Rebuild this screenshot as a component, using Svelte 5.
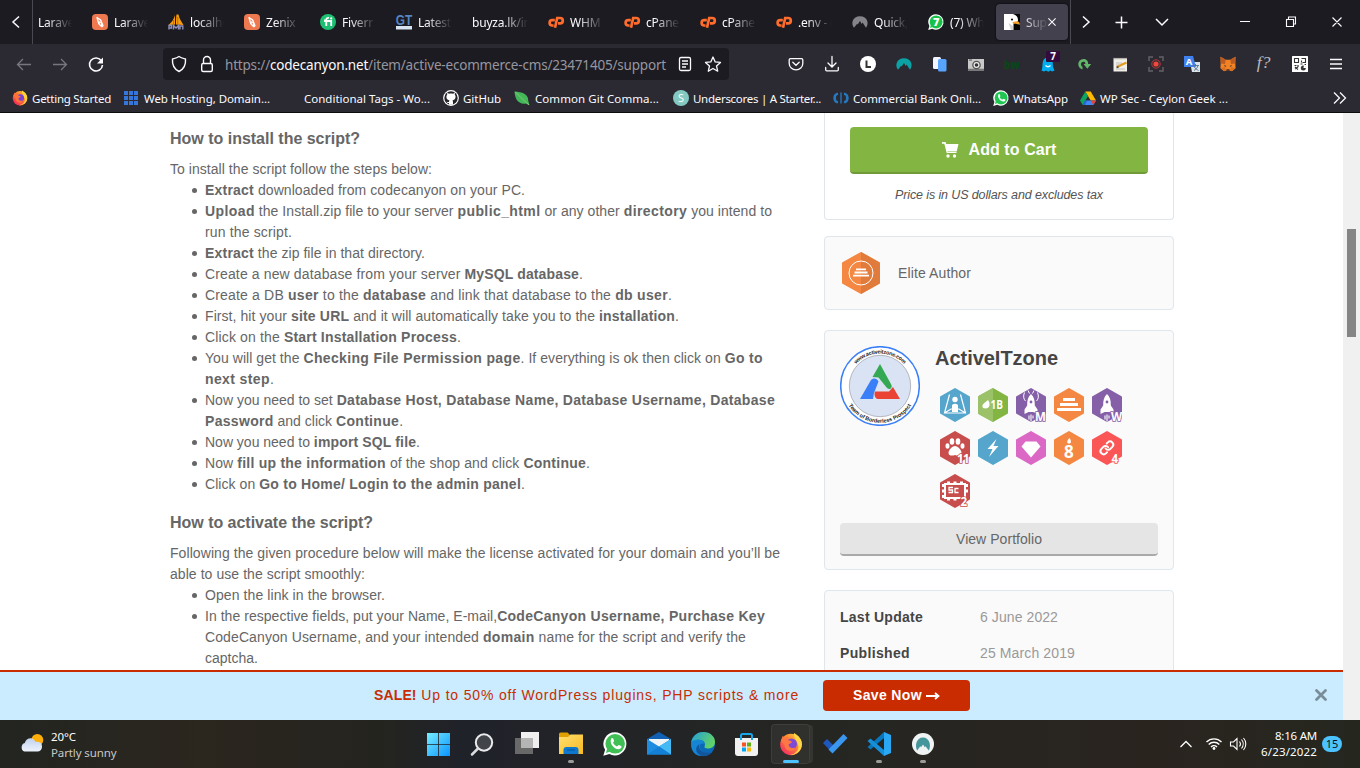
<script>
  // Spreads the letters of a line so that it takes the given width;
  // bold runs get a little more (or less) room than the regular ones.
  function fit(node, options) {
    const [width, extra = 0.15] = Array.isArray(options) ? options : [options];
    if (!width) return;
    const natural = node.getBoundingClientRect().width;
    const count = node.textContent.length;
    const bolds = [...node.querySelectorAll('b')];
    const boldCount = bolds.reduce((sum, b) => sum + b.textContent.length, 0);
    const spacing = (width - natural - extra * boldCount) / count;
    node.style.letterSpacing = `${spacing}px`;
    for (const b of bolds) b.style.letterSpacing = `${spacing + extra}px`;
  }

  const hex = (fill) => `<path d="M15 1 29 9V25L15 33 1 25V9Z" fill="${fill}" stroke="${fill}" stroke-width="2" stroke-linejoin="round"/>`;
  const num = (t, fill, x = 18, y = 32) => `<text x="${x}" y="${y}" font-family="Open Sans, sans-serif" font-weight="700" font-size="11.500" fill="#fff" stroke="${fill}" stroke-width="1.600" paint-order="stroke" letter-spacing="-.5">${t}</text>`;
  const rocket = '<path d="M15 6c3 3 4 6.500 3.800 11.500l2.700 4v4.500l-4-2h-5l-4 2v-4.500l2.700-4C11 12.500 12 9 15 6Z" fill="#fff"/><circle cx="15" cy="14" r="1.400" fill="#8560a8"/><path d="M13 27.500v4M15 26.500v7M17 27.500v3" stroke="#fff" stroke-width="1.100"/>';
  const cp = '<path d="M6.800 6.100H4.300a2.700 2.700 0 0 0 0 5.400h1.300M7 13.800 9.200 4h2.900a2.600 2.600 0 0 1 0 5.400H10" fill="none" stroke="#ff6c2c" stroke-width="2.700"/>';
  const bubble = (fill) => `<path d="M8 .2a7.700 7.700 0 1 1-3.700 14.500L.2 15.900l1.200-4A7.700 7.700 0 0 1 8 .2Z" fill="#fff"/><circle cx="8.100" cy="7.900" r="6.500" fill="${fill}"/><path d="m2 14 .8-3 2 2z" fill="${fill}"/>`;
  const phone = '<path d="M5.600 4.300c.5-.5 1-.3 1.200.2l.6 1.400c.1.500-.6.900-.7 1.300.6 1.200 1.500 1.900 2.600 2.400.5-.1.900-1 1.300-.9l1.500.7c.5.300.2 1.100-.2 1.500-2.800 2.300-8.500-2.900-6.300-6.600Z" fill="#fff"/>';
  const fox = '<circle cx="8" cy="8.300" r="7.200" fill="url(#ff)"/><path d="M10 .6c3 1.500 5.800 4.800 5.200 8.500-.8 4.400-4.700 6.500-8 6.200 4.300-.8 6.300-3.600 5.600-6.700C12.200 6 9.500 4 10 .6Z" fill="#ffd43a"/><circle cx="8.300" cy="8" r="3.700" fill="#7542d4"/><path d="M1.300 5.800 2.500 2.500l1.400 2L5.800 3l.5 2.500c1 .1 2 .5 2.400 1.300L6.400 8.300c0 2 2 3 4.400 2C9.600 14 4 13.200 3.600 8.700Z" fill="#ff7039"/>';
  const nord = (fill) => `<path d="M2 13.800C-1.400 9.500.5 2.200 8 2.200s9.400 7.300 6 11.600l-3.400-5.200-.9 1.500L8 7 5.700 10.600 5.100 9.700Z" fill="${fill}"/>`;

  const art = {
    laravel: '<rect width="16" height="16" rx="4" fill="#ee7950"/><path d="m5 3.500 3.700 2.500L11 11.800 9.800 12.700 6.800 9.800Z" fill="none" stroke="#fff" stroke-width="1.300" stroke-linejoin="round"/><path d="M8.700 6 7 9l2.300-.5.300 3.500" fill="none" stroke="#fff" stroke-width="1"/>',
    pma: '<path d="M7 1C6 5 4 8 .5 11L7 10.500ZM8.500.5C8 4 8 7 8 10.500l7.500.5C13.500 8 11 4 10.500.5Z" fill="#f89c0e"/><path d="M9.700 3v7M5.500 6v4.500" stroke="#9a5a12" stroke-width=".7"/><path d="M1 15.500v-4h2.500v2.500H1m4.500 1.500v-4L8 14l2.500-2.500v4m1.500 0v-3.500h2.800v3.500" stroke="#8f8fb8" stroke-width="1.400" fill="none"/>',
    fiverr: '<circle cx="8" cy="8" r="8" fill="#1dbf73"/><path d="M4 6.500h2.300V5.700C6.300 4.200 7.200 3.700 9 3.900M6.300 6v6M4 7h7.200v5" fill="none" stroke="#fff" stroke-width="1.800"/><circle cx="11.200" cy="4.400" r="1.100" fill="#fff"/>',
    gt: '<rect y="12" width="16" height="3.500" fill="#d7e4f2"/><text x="-.3" y="10.800" font-family="Liberation Sans" font-weight="700" font-size="14" textLength="16.500" lengthAdjust="spacingAndGlyphs" fill="#5486c0">GT</text>',
    cp,
    nordGrey: nord('#85848b'),
    nordTeal: nord('#0aa2a4'),
    wa7: bubble('#16c14a') + '<text x="5" y="12" font-family="Open Sans" font-weight="800" font-size="11" fill="#fff">7</text>',
    wa: bubble('#1fc752') + phone,
    bird: '<rect width="16" height="16" fill="#050505"/><path d="M0 0h9c4 1 5.500 4 4.800 7.500L9.500 9.500 9.500 16H0Z" fill="#fff"/><path d="m8.500 8 4.500-.7c2 .3 3 1.500 2.800 3.500-2-.8-4-1-6.800-1Z" fill="#f4a024"/><circle cx="8" cy="5.500" r="1.100" fill="#111"/><path d="m4.500 9 4.500 3v4H7Z" fill="#d2d2d2"/>',
    firefox: fox,
    grid: '<path d="M0 0h4v4H0zm5 0h4v4H5zm5 0h4v4h-4zM0 5h4v4H0zm5 0h4v4H5zm5 0h4v4h-4zM0 10h4v4H0zm5 0h4v4H5zm5 0h4v4h-4z" fill="#3576da" transform="translate(1 1)"/>',
    github: '<circle cx="8" cy="8" r="7.900" fill="#fff"/><circle cx="8" cy="8" r="6.700" fill="#25242b"/><path d="M4.300 4.500 4 2.800l2 .9c1.300-.3 2.700-.3 4 0l2-.9-.3 1.700c1.700 2.200.9 5.500-2.200 5.900.7.800.5 2.500.5 4.300H6v-1.800c-1.500.3-2-.5-2.600-1.500 1 .2 1.700 1 2.600.6 0-.6.100-1.200.5-1.600-3.100-.4-3.900-3.700-2.200-5.900Z" fill="#fff"/>',
    leaf: '<path d="M.5 1.500C8 2 14.500 4 14.200 10.500l1.300 4.800-3.500-1.800C5 14.700 1 10 .5 1.500Z" fill="#44b75b"/><path d="M1 2c5 4 7 7 14 13" stroke="#8fd06c" fill="none" stroke-width=".8"/>',
    under: '<circle cx="8" cy="8" r="8" fill="#83c9c2"/><text x="4.900" y="12" font-family="Open Sans" font-size="11" fill="#fff">S</text>',
    bank: '<path d="M5 2.700C2 2.700.3 5 .3 8S2 13.300 5 13.300V11C3.500 11 3 9.800 3 8s.5-3 2-3Zm6 0c3 0 4.700 2.300 4.700 5.300S14 13.300 11 13.300V11c1.500 0 2-1.200 2-3s-.5-3-2-3ZM7.300 2.500h1.400v11H7.300z" fill="#2478bd"/>',
    drive: '<path d="M5.300 1.500h5.400l5.300 9h-5.300Z" fill="#ffba00"/><path d="M5.300 1.500 8 6.100 2.700 15 0 10.500Z" fill="#0fa35f"/><path d="M5.300 10.500H16L13.300 15H2.700Z" fill="#4285f4"/><path d="m10.700 10.500H16L13.300 15Z" fill="#ea4335"/><path d="M2.700 15 5.300 10.500h2L5 15Z" fill="#2367d5"/>',
    pocket: '<path d="M2.500 2.700h11a1.300 1.300 0 0 1 1.300 1.300v3.500a6.800 6.300 0 0 1-13.600 0V4a1.300 1.300 0 0 1 1.300-1.300ZM4.800 6.300 8 9.300l3.200-3" fill="none" stroke="#fbfbfe" stroke-width="1.300" stroke-linecap="round"/>',
    download: '<path d="M8 .5v10M4 7l4 4 4-4M1.700 11.500v2.300q0 1 1 1h10.600q1 0 1-1v-2.300" fill="none" stroke="#fbfbfe" stroke-width="1.300" stroke-linecap="round"/>',
    ell: '<circle cx="8" cy="8" r="8" fill="#fff"/><path d="M6.500 4.500v6.600H11" stroke="#333" stroke-width="2" fill="none"/>',
    blue: '<rect x="1" y="1" width="8" height="12" rx="1.500" fill="#f2f5ff"/><rect x="6" y="3" width="8.500" height="12.500" rx="1.500" fill="#58a5ff"/>',
    camera: '<rect y="3" width="16" height="11.500" fill="#c9c9c9"/><path d="M1 4h3M0 13.500h16" stroke="#777" stroke-width="1.500"/><circle cx="8.500" cy="9" r="4.300" fill="#555"/><circle cx="8.500" cy="9" r="3" fill="#eee"/><circle cx="8.500" cy="9" r="1.800" fill="#333"/>',
    bw: '<text x="0" y="13" font-family="Open Sans" font-weight="800" font-size="12" textLength="16" lengthAdjust="spacingAndGlyphs" fill="#0c4518">bw</text>',
    ghost: '<path d="M1.500 14.500C3 11 2 8 3.200 4.500 5 .5 11 .5 12.500 4.500L13 11l1.500 3.500-2.500 1-1.500-1-2.200 1.200-2.300-1.200-2 1Z" fill="#00aef0"/><path d="M5.500 9.500q2.500 2.500 5 0" fill="none" stroke="#fff" stroke-width="1.300"/>',
    gee: '<path d="M6.500 13.500C.5 12 1 3 7.500 3c3.500 0 4.700 2.300 4.700 5.300H9.500c-.1-2-1-2.500-2-2.500-3 0-3.100 3.800-1 5ZM7.500 8h7.700l-3.900 4.700Z" fill="#62b668"/>',
    note: '<rect x="1.500" y="2" width="13.500" height="13.500" fill="#f1efe7"/><path d="M1.500 2.500H15" stroke="#77756f" stroke-width="1.500" stroke-dasharray="1 1"/><path d="M4 7h6M4 9h4M4 13h9" stroke="#bbb"/><path d="m5 11 9.500-4.500" stroke="#e39a20" stroke-width="2"/><path d="m4.500 11.500 2-.8" stroke="#444" stroke-width="1.500"/>',
    rec: '<path d="M1 5V1h4m6 0h4v4m0 6v4h-4m-6 0H1v-4" fill="none" stroke="#656268" stroke-width="1.400"/><circle cx="8" cy="8" r="4.200" fill="none" stroke="#b83a36"/><circle cx="8" cy="8" r="2.600" fill="#f2463f"/>',
    translate: '<path d="M6 6h10v10H8Z" fill="#dce3e8"/><path d="M0 0h9l3 11H0Z" fill="#3f81ef"/><text x="1.700" y="8.800" font-family="Open Sans" font-weight="700" font-size="9.500" fill="#fff">A</text><path d="M8.500 9.500H15M11.500 8v1.500M14 9.500c-.5 2.500-2.500 4-4 5m0-4c1 2 3 3 4.500 4" stroke="#54799a" fill="none"/>',
    mask: '<path d="m.5.800 5.200 3h4.600l5.200-3-.2 7 .3 4.400-3.600 3-2.500-.7h-3l-2.500.7-3.600-3 .3-4.400Z" fill="#f28325"/><path d="m.5.800 5.200 3L5 8 .8 7.500Zm15 0-5.200 3L11 8l4.200-.5Z" fill="#bb5b22"/><path d="m4 9 2.500 1-1.500.8Zm8 0-2.500 1 1.500.8Z" fill="#33313a"/><path d="M6.500 13.200h3v1.600h-3z" fill="#4a3330"/><path d="m1 12 4-1 1 4-2 0zm14 0-4-1-1 4h2z" fill="#d9701f"/>',
    func: '<text x=".8" y="12" font-family="Liberation Serif" font-style="italic" font-size="17.500" fill="#b9b8bd">f?</text>',
    qr: '<rect width="16" height="16" rx=".5" fill="#fff"/><path d="M2.500 2.500h4v4h-4zM9.500 2.500h4v4h-3M9.500 4.500v2" fill="none" stroke="#333" stroke-width="1.100"/><path d="M2.500 9.500h2M6 9v2M3 13l3-2M3 11l3 2.500M8.500 8h2M12.500 8.500h1.500" fill="none" stroke="#333" stroke-width="1.200"/><circle cx="11.300" cy="12" r="2.500" fill="#333"/><path d="m11.500 12 .5-3.500 3 3.500Z" fill="#fff"/>',
    menu: '<path d="M2 3.500h12M2 8h12M2 12.500h12" stroke="#fbfbfe" stroke-width="1.300"/>',
    start: '<path d="M0 0h11.200v11.200H0zM12 0h11v11.200H12zM0 12h11.200v11H0zM12 12h11v11H12z" fill="url(#win)"/>',
    search: '<circle cx="13" cy="9.500" r="8.200" fill="#4a4d51" fill-opacity=".8" stroke="#e8eaec" stroke-width="2"/><path d="m7 15.500-6 6" stroke="#dadcde" stroke-width="2.500" stroke-linecap="round"/>',
    taskview: '<path d="M0 6h18v16H0z" fill="#696969"/><path d="M6 0h18v16H6z" fill="#efefef"/><path d="M6 6h12v10H6z" fill="#b5b5b5"/>',
    explorer: '<path d="M0 2q0-1.500 1.500-1.500h7L11 3v5H0Z" fill="#e0a100"/><path d="M0 5h9l2.500-2.500H24V22H0Z" fill="url(#fold)"/><path d="M4.500 22v-4q0-3 3-3h9q3 0 3 3v4Z" fill="#0d78ce"/><path d="M8 18h8" stroke="#075ba5" stroke-width="1.300"/>',
    waBig: '<g transform="scale(1.5)">' + bubble('#40bf55') + phone + '</g>',
    mail: '<path d="M0 7 12 0l12 7v7H0Z" fill="#1060b3"/><path d="M2 7h20v9H2Z" fill="#eef4f8"/><path d="M0 7v15.500h24V7L12 14.500Z" fill="#1e8de0"/><path d="M24 7v15.500L12 14.500Z" fill="#45b9f4"/><path d="m0 22.500 12-8 12 8Z" fill="#1380d5"/>',
    edge: '<circle cx="12" cy="12" r="12" fill="#0b68b7"/><path d="M.2 10C2 3 7 0 12 0c8 0 12 5 12 10 0 5-4 6.500-7.500 6.500-2 0-3.500-.7-3-2 1-2 .5-6.500-4.500-6.500C4 8 1 10 .2 10Z" fill="url(#edge)"/><path d="M.2 10C4 7 12 6 13.500 12c-5-2-6 3-3.500 6 2.500 3.500 8 3.500 11.500 1.500C14 27-1 26 .2 10Z" fill="#1686d4"/><path d="M8.500 12c-2 4 2 9 8 8.500 2 0 4-.5 5-1-4 6-12 6-15.500 1-2-4 0-7 2.500-8.500Z" fill="#12569e"/>',
    store: '<path d="M0 5h23v15q0 3-3 3H3q-3 0-3-3Z" fill="#f1f1f1"/><path d="M6 7V2.500Q6 1 7.500 1h8Q17 1 17 2.500V7" fill="none" stroke="#18a6e8" stroke-width="2"/><path d="M7 9.500h4v4H7z" fill="#f35325"/><path d="M12 9.500h4v4h-4z" fill="#61b010"/><path d="M7 14.500h4v4H7z" fill="#07a4ee"/><path d="M12 14.500h4v4h-4z" fill="#ffb908"/>',
    firefoxBig: '<g transform="scale(1.5)">' + fox + '</g>',
    todo: '<path d="m0 11 4-4 7.500 7.500-3 5.500Z" fill="#1e57bd"/><path d="M20.500 2 24.500 6 9.500 21.500 5.500 17.500Z" fill="#3a96ee"/>',
    vscode: '<path d="m17 0 7 3v18l-7 3Z" fill="#2ba8f4"/><path d="M17 0v6L3.500 17.500.5 15Z" fill="#0877bd"/><path d="M17 24v-6L3.500 6.500.5 9Z" fill="#168fd8"/>',
    nordBig: '<circle cx="11" cy="11" r="11" fill="#f0f3f3"/><path d="M5.200 17.500C2.600 13 4.200 4.500 11 4.500s8.400 8.500 5.800 13l-3.300-4.300-.7 1L11 11.500l-2 2.800-.7-1Z" fill="#44969a"/>'
  };

  const tabs = [
    { text: 'Laravel', first: true }, { icon: 'laravel', text: 'Laravel' }, { icon: 'pma', text: 'localhost' },
    { icon: 'laravel', text: 'Zenix -' }, { icon: 'fiverr', text: 'Fiverr /' }, { icon: 'gt', text: 'Latest v' },
    { text: 'buyza.lk/index' }, { icon: 'cp', text: 'WHM L' }, { icon: 'cp', text: 'cPanel' }, { icon: 'cp', text: 'cPanel' },
    { icon: 'cp', text: '.env - e' }, { icon: 'nordGrey', text: 'Quick, N' }, { icon: 'wa7', text: '(7) Wha' }
  ];
  const addons = ['pocket', 'download', 'ell', 'nordTeal', 'blue', 'camera', 'bw', 'ghost', 'gee', 'note', 'rec', 'translate', 'mask', 'func', 'qr', 'menu'];
  const bookmarks = [
    { icon: 'firefox', text: 'Getting Started', w: 79, box: 111 },
    { icon: 'grid', text: 'Web Hosting, Domain...', w: 126, box: 161, gap: 5 },
    { icon: '', text: 'Conditional Tags - Wo...', w: 126, box: 159 },
    { icon: 'github', text: 'GitHub', w: 38, box: 71 },
    { icon: 'leaf', text: 'Common Git Comma...', w: 124, box: 159, gap: 5 },
    { icon: 'under', text: 'Underscores | A Starter...', w: 128, box: 160 },
    { icon: 'bank', text: 'Commercial Bank Onli...', w: 128, box: 160 },
    { icon: 'wa', text: 'WhatsApp', w: 55, box: 87 },
    { icon: 'drive', text: 'WP Sec - Ceylon Geek ...', w: 128, box: 150 }
  ];
  const install = [
    [['<b>Extract</b> downloaded from codecanyon on your PC.', 320]],
    [['<b>Upload</b> the Install.zip file to your server <b>public_html</b> or any other <b>directory</b> you intend to', 567, 0.35], ['run the script.', 87]],
    [['<b>Extract</b> the zip file in that directory.', 220]],
    [['Create a new database from your server <b>MySQL database</b>.', 378, 0]],
    [['Create a DB <b>user</b> to the <b>database</b> and link that database to the <b>db user</b>.', 467]],
    [['First, hit your <b>site URL</b> and it will automatically take you to the <b>installation</b>.', 474, 0.1]],
    [['Click on the <b>Start Installation Process</b>.', 256, 0.05]],
    [['You will get the <b>Checking File Permission page</b>. If everything is ok then click on <b>Go to</b>', 558, 0.3], ['<b>next step</b>.', 69]],
    [['Now you need to set <b>Database Host, Database Name, Database Username, Database</b>', 570, 0.3], ['<b>Password</b> and click <b>Continue</b>.', 198, 0.3]],
    [['Now you need to <b>import SQL file</b>.', 215]],
    [['Now <b>fill up the information</b> of the shop and click <b>Continue</b>.', 385]],
    [['Click on <b>Go to Home/ Login to the admin panel</b>.', 320, 0.2]]
  ];
  const activate = [
    [['Open the link in the browser.', 180]],
    [['In the respective fields, put your Name, E-mail,<b>CodeCanyon Username, Purchase Key</b>', 560, 0.25], ['CodeCanyon Username, and your intended <b>domain</b> name for the script and verify the', 541, 0.2], ['captcha.', 53]]
  ];
  const badges = [
    hex('#55a5cc') + '<path d="m9.500 6.500-5 18.500h21l-5-18.500M4.500 25 11 21h8l6.500 4" fill="none" stroke="#fff" stroke-width="1.200"/><circle cx="15" cy="11.500" r="2.700" fill="#fff"/><path d="M12 24v-7q3-2.500 6 0v7Z" fill="#fff"/>',
    hex('#82b541') + '<path d="M15 0v34L1 26.500 0 25V9L1 7.500Z" fill="#9bc269"/><path d="M5 20c-2-4 2-5 5-8 3.500 5 1 10-5 8Z" fill="#fff"/><text x="12.500" y="21" font-family="Open Sans" font-size="11.500" font-weight="700" fill="#fff" textLength="12.500" lengthAdjust="spacingAndGlyphs">1B</text>',
    hex('#8560a8') + rocket + '<path d="M8.500 4.500C7 8 7.500 11 9.500 13M21.500 4.500C23 8 22.500 11 20.500 13M12 2.500l1.500 3M18 2.500l-1.500 3" stroke="#fff" fill="none"/>' + num('M', '#8560a8', 19, 33),
    hex('#f48843') + '<path d="M9 10h12v3H9zm-3 5h18v3H6zm-3 5h24v3H3z" fill="#fff"/>',
    hex('#8560a8') + rocket + num('W', '#8560a8', 19, 33),
    hex('#c84d4d') + '<g fill="#fff"><ellipse cx="7.500" cy="15" rx="2" ry="2.800"/><ellipse cx="12" cy="10.500" rx="2.300" ry="3.200"/><ellipse cx="18" cy="10.500" rx="2.300" ry="3.200"/><ellipse cx="22.500" cy="15" rx="2" ry="2.800"/><path d="M15 15c3 0 6.500 4 6.500 7s-4 3-6.500 2c-2.500 1-6.500 1-6.500-2s3.500-7 6.500-7Z"/></g>' + num('11', '#c84d4d', 17, 31.5),
    hex('#55a5cc') + '<path d="m18.500 8-9 10h5L11 26l9.500-11h-5Z" fill="#fff"/>',
    hex('#db68c5') + '<path d="M9.500 10.500h11l4 5L15 26.500 5.500 15.500Z" fill="#fff"/>',
    hex('#f48843') + '<path d="M15.500 7c2 3 2 5.500-.5 5.500S12.500 10 15.500 7Z" fill="#fff"/><text x="10" y="27" font-family="Open Sans" font-weight="700" font-size="17" fill="#fff">8</text>',
    hex('#fa5656') + '<g transform="translate(7.200 9.200) scale(.64)" fill="none" stroke="#fff" stroke-width="3" stroke-linecap="round"><path d="M10 13a5 5 0 0 0 7.540.540l3-3a5 5 0 0 0-7.070-7.070l-1.720 1.710"/><path d="M14 11a5 5 0 0 0-7.540-.540l-3 3a5 5 0 0 0 7.070 7.070l1.710-1.710"/></g>' + num('4', '#fa5656', 19.5),
    hex('#c84d4d') + '<path d="M7 7.500h3v3H7zm6.500 0h3v3h-3zm6.500 0h3v3h-3zM7 23.500h3v3H7zm6.500 0h3v3h-3zM2 10h3v3H2zm0 5.500h3v3H2zm0 5.500h3v3H2zM25 10h3v3h-3zm0 5.500h3v3h-3z" fill="#fff"/><rect x="5" y="10" width="20" height="14" fill="none" stroke="#fff" stroke-width="2"/><path d="M13 13.500H9v2.500h3.500v2.500H8.500M18.500 14.500h-3.500v4h3.500" fill="none" stroke="#fff" stroke-width="1.300"/>' + num('2', '#c84d4d', 20.5)
  ];
  const apps = [
    { icon: 'start', w: 23 }, { icon: 'search', w: 23 }, { icon: 'taskview', w: 24 }, { icon: 'explorer', w: 24, run: true },
    { icon: 'waBig', w: 24 }, { icon: 'mail', w: 24 }, { icon: 'edge', w: 24 }, { icon: 'store', w: 23 },
    { icon: 'firefoxBig', w: 24, active: true }, { icon: 'todo', w: 24 }, { icon: 'vscode', w: 24, run: true }, { icon: 'nordBig', w: 22, run: true }
  ];
</script>

{#snippet glyph(name, size = 16, box = size)}
  <svg width={size} height={size} viewBox="0 0 {box} {box}" overflow="visible">{@html art[name]}</svg>
{/snippet}

{#snippet lines(items)}
  <ul>
    {#each items as item}
      <li>{#each item as [html, w, extra]}<div class="line"><span use:fit={[w, extra]}>{@html html}</span></div>{/each}</li>
    {/each}
  </ul>
{/snippet}

<svg class="defs" width="0" height="0">
  <defs>
    <linearGradient id="ff" x1="1" y1="0" x2=".2" y2="1"><stop offset="0" stop-color="#ffd23c" /><stop offset=".45" stop-color="#ff8328" /><stop offset="1" stop-color="#f4205f" /></linearGradient>
    <linearGradient id="win" x1="0" y1="0" x2="1" y2="1"><stop stop-color="#76edff" /><stop offset="1" stop-color="#0a94ff" /></linearGradient>
    <linearGradient id="fold" x1="0" y1="0" x2="1" y2="1"><stop stop-color="#ffdf70" /><stop offset="1" stop-color="#f8ba22" /></linearGradient>
    <linearGradient id="edge" x1="0" y1="0" x2="1" y2=".5"><stop stop-color="#249edb" /><stop offset="1" stop-color="#61d366" /></linearGradient>
    <linearGradient id="cloud" x1="0" y1="0" x2="0" y2="1"><stop stop-color="#bfd2ee" /><stop offset="1" stop-color="#eef3fb" /></linearGradient>
  </defs>
</svg>

<div class="screen">
  <header class="chrome">
    <div class="tabstrip">
      <div class="scroll-left"><svg width="16" height="16" viewBox="0 0 16 16"><path d="M11 2.500 5 8l6 5.500" fill="none" stroke="#fbfbfe" stroke-width="1.500" /></svg></div>
      {#each tabs as t}
        <div class="tab" class:first={t.first}>
          {#if t.icon}{@render glyph(t.icon)}{/if}
          <span class="tab-text">{t.text}</span>
        </div>
      {/each}
      <div class="tab active">
        {@render glyph('bird')}
        <span class="tab-text">Support</span>
        <svg class="x" width="8" height="8" viewBox="0 0 8 8"><path d="m.4.400 7.200 7.200m0-7.200L.4 7.600" stroke="#fbfbfe" stroke-width="1.100" /></svg>
      </div>
      <div class="tools">
        <svg width="290" height="44" viewBox="1070 0 290 44" fill="none" stroke="#fbfbfe" stroke-width="1.300">
          <path d="m1083 16.500 6 5.500-6 5.500M1121.500 16.500v12M1115.500 22.500h12M1156 19l6 6 6-6" stroke-width="1.500" />
          <path d="M1240 21.500h10M1286.500 19.500h7v7h-7zM1288.500 19v-2h7v7h-2M1332.500 17.500l9 9m0-9-9 9" stroke-width="1.100" />
        </svg>
      </div>
    </div>

    <div class="navbar">
      <svg class="nav-icons" width="163" height="40" viewBox="0 44 163 40" fill="none" stroke="#fbfbfe" stroke-width="1.300">
        <path d="M17.500 64.500H31M23 59l-5.500 5.500L23 70M53 64.500h13.500M61 59l5.500 5.500L61 70" stroke="#77767e" />
        <path d="M101.500 61a6.500 6.500 0 1 0 1 4" stroke-width="1.600" /><path d="M103 57.500v6h-6z" fill="#fbfbfe" stroke="none" />
      </svg>
      <div class="urlbar">
        <svg width="62" height="32" viewBox="163 48 62 32" fill="none" stroke="#fbfbfe" stroke-width="1.400">
          <path d="M179 56.500c2 1.500 4.500 2 6.500 2.500.5 6-1.500 10-6.500 12.500-5-2.500-7-6.500-6.500-12.500 2-.5 4.500-1 6.500-2.500Z" stroke-linejoin="round" />
          <rect x="201.700" y="63.500" width="10.600" height="8" rx="1.500" /><path d="M203.500 63.500V60a3.500 3.500 0 0 1 7 0v3.500" />
        </svg>
        <span class="url"><span use:fit={441}>https://<i>codecanyon.net</i>/item/active-ecommerce-cms/23471405/support</span></span>
        <svg class="url-icons" width="62" height="32" viewBox="667 48 62 32" fill="none" stroke="#fbfbfe" stroke-width="1.300">
          <rect x="679.500" y="57.500" width="11" height="13" rx="1.500" /><path d="M682 61h6M682 64h6M682 67h4" />
          <path d="m713 57 2.200 4.900 5.300.5-4 3.600 1.200 5.200-4.700-2.700-4.700 2.700 1.200-5.200-4-3.600 5.300-.5Z" stroke-linejoin="round" />
        </svg>
      </div>
      <div class="addons">
        {#each addons as a}
          <div class="addon">{@render glyph(a)}{#if a === 'ghost'}<b class="count">7</b>{/if}</div>
        {/each}
      </div>
    </div>

    <div class="bookmarks">
      {#each bookmarks as b}
        <div class="bookmark" style="width: {b.box}px; gap: {b.gap ?? 4}px">
          {@render glyph(b.icon)}<span use:fit={b.w}>{b.text}</span>
        </div>
      {/each}
      <svg class="more" width="14" height="12" viewBox="0 0 14 12" fill="none" stroke="#fbfbfe" stroke-width="1.300"><path d="m1 .5 5.500 5.500L1 11.500M7 .5l5.500 5.500L7 11.500" /></svg>
    </div>
  </header>

  <main class="page">
    <article>
      <h3><span use:fit={190}>How to install the script?</span></h3>
      <div class="line"><span use:fit={262}>To install the script follow the steps below:</span></div>
      {@render lines(install)}
      <h3 class="second"><span use:fit={203}>How to activate the script?</span></h3>
      <div class="line"><span use:fit={610}>Following the given procedure below will make the license activated for your domain and you’ll be</span></div>
      <div class="line"><span use:fit={195}>able to use the script smoothly:</span></div>
      {@render lines(activate)}
    </article>

    <aside>
      <section class="card buy">
        <div class="cart">
          <svg width="17" height="16" viewBox="0 0 17 16"><path d="M0 0h3.500l.8 2H16.500l-1.800 7.500H5.500L5 11h-.3L2.300 1.800H0Z" fill="#fff" /><path d="M5 10.500h9.500" stroke="#fff" /><circle cx="6" cy="14" r="1.700" fill="#fff" /><circle cx="12.500" cy="14" r="1.700" fill="#fff" /></svg>
          <span use:fit={88}>Add to Cart</span>
        </div>
        <p><span use:fit={208}>Price is in US dollars and excludes tax</span></p>
      </section>

      <section class="card elite">
        <svg width="38" height="42" viewBox="0 0 38 42">
          <path d="M19 1 37 11V31L19 41 1 31V11Z" fill="#f48843" stroke="#f48843" stroke-width="2" stroke-linejoin="round" />
          <path d="M19 0 37.500 10.500 38 12V30L37.500 31.500 19 42Z" fill="#e07b3c" />
          <circle cx="19" cy="21" r="12" fill="none" stroke="#fff" stroke-width="1" />
          <path d="M14 17.300h10M12.500 20.500h13M11 23.700h16" stroke="#fff" stroke-width="1.800" />
        </svg>
        <span use:fit={73}>Elite Author</span>
      </section>

      <section class="card author">
        <div class="profile">
          <svg width="80" height="80" viewBox="0 0 80 80">
            <circle cx="40" cy="40" r="39.300" fill="#fff" stroke="#3a7ff8" stroke-width="1.500" />
            <circle cx="40" cy="40" r="30.700" fill="#dae3f3" stroke="#8d9099" stroke-width=".6" />
            <path d="m40 18 11.500 21c1 3-1.500 5.500-4.500 3L38.500 31.500 32.500 31Z" fill="#34a853" />
            <path d="M20 53 31 34c2-2.500 6-2 7.500 1.500L34 47l-1 6Z" fill="#3a7ff8" />
            <path d="M60 53H38c-3.500-.5-4-5-3-7.500h14l4-4.500Z" fill="#ea4335" />
            <path id="arc-top" d="M7.500 40a32.500 32.500 0 0 1 65 0" fill="none" />
            <path id="arc-bottom" d="M3.200 40a36.800 36.800 0 0 0 73.600 0" fill="none" />
            <text class="ring"><textPath href="#arc-top" startOffset="50%" text-anchor="middle" textLength="54">www.activeitzone.com</textPath></text>
            <text class="ring"><textPath href="#arc-bottom" startOffset="50%" text-anchor="middle" textLength="75">Team of Borderless Prospect</textPath></text>
          </svg>
          <div>
            <h2><span use:fit={123}>ActiveITzone</span></h2>
            <div class="badges">
              {#each badges as b}<svg width="30" height="34" viewBox="0 0 30 34">{@html b}</svg>{/each}
            </div>
          </div>
        </div>
        <div class="portfolio"><span use:fit={86}>View Portfolio</span></div>
      </section>

      <section class="card meta">
        <div><b><span use:fit={83}>Last Update</span></b><em><span use:fit={78}>6 June 2022</span></em></div>
        <div><b><span use:fit={70}>Published</span></b><em><span use:fit={95}>25 March 2019</span></em></div>
      </section>
    </aside>

    <div class="scrollbar"><div class="thumb"></div></div>

    <div class="banner">
      <span class="sale"><span use:fit={[425, -0.7]}><b>SALE!</b> Up to 50% off WordPress plugins, PHP scripts &amp; more</span></span>
      <div class="save"><span use:fit={69}>Save Now</span><svg width="14" height="8" viewBox="0 0 14 8"><path d="M0 4h11.500M9 1 12.500 4 9 7" fill="none" stroke="#fff" stroke-width="1.800" /></svg></div>
      <svg class="close" width="12" height="12" viewBox="0 0 12 12"><path d="m1.500 1.500 9 9m0-9-9 9" stroke="#798c98" stroke-width="2.700" stroke-linecap="round" /></svg>
    </div>
  </main>

  <footer class="taskbar">
    <div class="weather">
      <svg width="24" height="18" viewBox="0 0 24 18"><circle cx="17.300" cy="6" r="6" fill="#ffae0a" /><path d="M4.500 17.500a4.500 4.500 0 0 1 .3-8.500C6 3 14 2.500 15.500 8c4-1 6.800 1.500 6.500 5 0 2.500-2 4.500-4.500 4.500Z" fill="url(#cloud)" /></svg>
      <div><div><span use:fit={25}>20°C</span></div><div class="dim"><span use:fit={65.5}>Partly sunny</span></div></div>
    </div>
    <div class="apps">
      {#each apps as a}
        <div class="app" class:on={a.active} class:run={a.run}>{@render glyph(a.icon, a.w)}</div>
      {/each}
    </div>
    <div class="tray">
      <svg width="76" height="20" viewBox="1176 734 76 20" fill="none" stroke="#fff" stroke-width="1.300">
        <path d="m1180.500 747 5.500-5.500 5.500 5.500" />
        <path d="M1206.500 742a10.500 10.500 0 0 1 15 0M1208.700 744.500a7.500 7.500 0 0 1 10.600 0M1211 747a4.300 4.300 0 0 1 6 0" stroke-width="1.400" /><circle cx="1214" cy="748.500" r="1.400" fill="#fff" stroke="none" />
        <path d="M1230.500 742h3l3.500-3.500v11l-3.500-3.500h-3ZM1239.500 741.500a4 4 0 0 1 0 5M1241.500 739.500a7 7 0 0 1 0 9M1243.500 738a9 9 0 0 1 0 12" stroke-width="1.100" />
      </svg>
      <div class="clock"><div><span use:fit={42}>8:16 AM</span></div><div><span use:fit={56}>6/23/2022</span></div></div>
      <div class="notify"><span>15</span></div>
    </div>
  </footer>
</div>

<style>
  :global(body) { margin: 0; overflow: hidden; }
  :global(svg) { display: block; flex: none; }
  .defs { position: absolute; }
  .screen { width: 1360px; height: 768px; display: flex; flex-direction: column; overflow: hidden; background: #fff; font-family: "Liberation Sans", Arial, sans-serif; }
  .screen span { white-space: nowrap; }

  .chrome { height: 112px; border-bottom: 1px solid #0c0c0d; background: #2b2a33; color: #fbfbfe; font-family: "Noto Sans", "Open Sans", sans-serif; font-size: 11.500px; flex: none; }
  .tabstrip { height: 44px; display: flex; background: #1c1b22; }
  .scroll-left { width: 32px; border-right: 1px solid #4a4952; display: grid; place-items: center; box-sizing: content-box; flex: none; }
  .tab { width: 76px; padding: 0 10px; box-sizing: border-box; display: flex; align-items: center; gap: 6px; flex: none; font-size: 12px; }
  .tab.first { width: 49px; padding-left: 5px; }
  .tab-text { flex: 1; min-width: 0; overflow: hidden; line-height: 20px; letter-spacing: -.2px; padding-top: 2px; -webkit-mask-image: linear-gradient(90deg, #000 calc(100% - 26px), transparent); mask-image: linear-gradient(90deg, #000 calc(100% - 26px), transparent); }
  .tab.active { background: #42414d; width: 72px; height: 36px; margin: 4px 2px; padding: 0 12px 0 8px; border-radius: 4px; gap: 6px; box-shadow: 0 0 2px #000; }
  .tab.active .tab-text { margin-right: -6px; }
  .tools { border-left: 1px solid #4a4952; margin-left: 0; flex: none; }
  .tools svg { margin-left: -1px; }

  .navbar { height: 40px; display: flex; align-items: center; }
  .urlbar { width: 566px; height: 32px; border-radius: 4px; background: #1c1b22; display: flex; align-items: center; flex: none; }
  .url { width: 442px; font-size: 13.500px; line-height: 20px; padding-top: 2px; color: #97969f; flex: none; }
  .url i { font-style: normal; color: #fbfbfe; }
  .addons { display: flex; margin-left: 49px; }
  .addon { width: 36px; display: grid; place-items: center; position: relative; }
  .count { position: absolute; left: 16px; top: -5px; width: 14px; height: 11px; background: #330b3d; color: #fff; border-radius: 1px; font-size: 10px; line-height: 11px; text-align: center; }
  .bookmarks { height: 28px; padding-left: 12px; display: flex; align-items: center; position: relative; }
  .bookmark { display: flex; align-items: center; flex: none; line-height: 20px; }
  .bookmark span { padding-top: 1px; }
  .more { margin-left: 103px; }

  .page { flex: 1; min-height: 0; overflow: hidden; position: relative; display: flex; align-items: flex-start; color: #666; font-size: 14px; line-height: 21px; }
  article { width: 654px; padding: 15px 0 0 170px; flex: none; }
  h3 { margin: 0 0 10px; font-size: 16px; line-height: 21px; font-weight: 700; }
  h3.second { margin-top: 17px; }
  .line { height: 21px; }
  ul { margin: 0; padding-left: 35px; list-style: none; }
  li { position: relative; }
  li::before { content: ""; position: absolute; left: -13px; top: 8px; width: 5px; height: 5px; border-radius: 50%; background: #666; }

  aside { width: 350px; display: flex; flex-direction: column; flex: none; }
  .card { box-sizing: border-box; border: 1px solid #dfe6ec; border-radius: 4px; background: #fafafa; flex: none; }
  .buy { height: 108px; margin-top: -1px; padding: 15px 25px 0; border-top: 0; border-radius: 0 0 4px 4px; background: #fff; }
  .cart { height: 45px; background: #82b541; border-bottom: 2px solid #6f9a37; border-radius: 4px; color: #fff; font-size: 16px; font-weight: 700; display: flex; align-items: center; justify-content: center; gap: 10px; }
  .buy p { margin: 11px 0 0; font-size: 12.500px; font-style: italic; text-align: center; color: #545454; }
  .elite { height: 74px; margin-top: 16px; padding-left: 17px; display: flex; align-items: center; gap: 18px; }
  .author { height: 240px; margin-top: 20px; padding: 15px; }
  .profile { height: 177px; display: flex; gap: 15px; }
  .ring { font-size: 5.500px; font-weight: 700; fill: #222; }
  h2 { margin: 0; color: #454545; font-size: 20px; line-height: 24px; }
  .badges { margin: 18px 0 0 5px; width: 190px; display: flex; flex-wrap: wrap; gap: 9px 8px; }
  .portfolio { height: 30px; padding-top: 1px; border-bottom: 2px solid #a9a9a9; border-radius: 4px; background: #e5e5e5; display: grid; place-items: center; }
  .meta { height: 120px; margin-top: 20px; padding: 16px 15px; }
  .meta div { display: flex; margin-bottom: 15px; }
  .meta b { width: 140px; color: #454545; }
  .meta em { font-style: normal; color: #999; }

  .scrollbar { width: 17px; align-self: stretch; margin-left: auto; background: #f0f0f0; flex: none; }
  .thumb { width: 9px; height: 108px; margin: 116px 0 0 4px; background: #858585; }
  .banner { position: absolute; left: 0; bottom: 0; width: 1343px; height: 50px; box-sizing: border-box; border-top: 2px solid #c82c00; background: #cbecff; display: flex; align-items: center; color: #c82c00; padding: 0 16px 0 374px; }
  .sale { width: 449px; margin-top: -1px; }
  .save { width: 147px; height: 31px; border-radius: 4px; background: #c82c00; color: #fff; font-weight: 700; display: flex; align-items: center; justify-content: center; gap: 4px; margin-top: -1px; }
  .close { margin: -2px 0 0 auto; }

  .taskbar { height: 48px; background: linear-gradient(90deg, #232521, #2b261e 15%, #24241f 28%, #20222a 34%, #252622 60%, #2a241f 85%, #25271f); display: flex; color: #fff; font-family: "Noto Sans", "Open Sans", sans-serif; font-size: 11.500px; line-height: 16px; flex: none; }
  .weather { width: 396.500px; padding-left: 20px; display: flex; align-items: center; gap: 7px; }
  .weather svg { margin-bottom: 3px; }
  .weather > div { padding-top: 2px; }
  .dim { color: #c9c8c5; }
  .apps { display: flex; flex: none; }
  .app { width: 44px; height: 48px; display: grid; place-items: center; position: relative; }
  .app.on::before { content: ""; position: absolute; inset: 4px 3px 4px 2px; border-radius: 4px; background: #ffffff0d; box-shadow: inset 0 0 0 1px #ffffff12, 4px 0 0 -1px #ffffff12; }
  .app.run::after, .app.on::after { content: ""; position: absolute; bottom: 5px; width: 6px; height: 3px; border-radius: 2px; background: #9b9b98; }
  .app.on::after { width: 16px; background: #4cc2ff; }
  .tray { margin-left: auto; display: flex; align-items: center; padding-right: 18px; }
  .clock { width: 65px; text-align: right; }
  .notify { width: 20px; height: 16px; margin-left: 5px; border-radius: 8px; background: #4cc2ff; color: #111; display: grid; place-items: center; font-size: 11px; }
</style>
